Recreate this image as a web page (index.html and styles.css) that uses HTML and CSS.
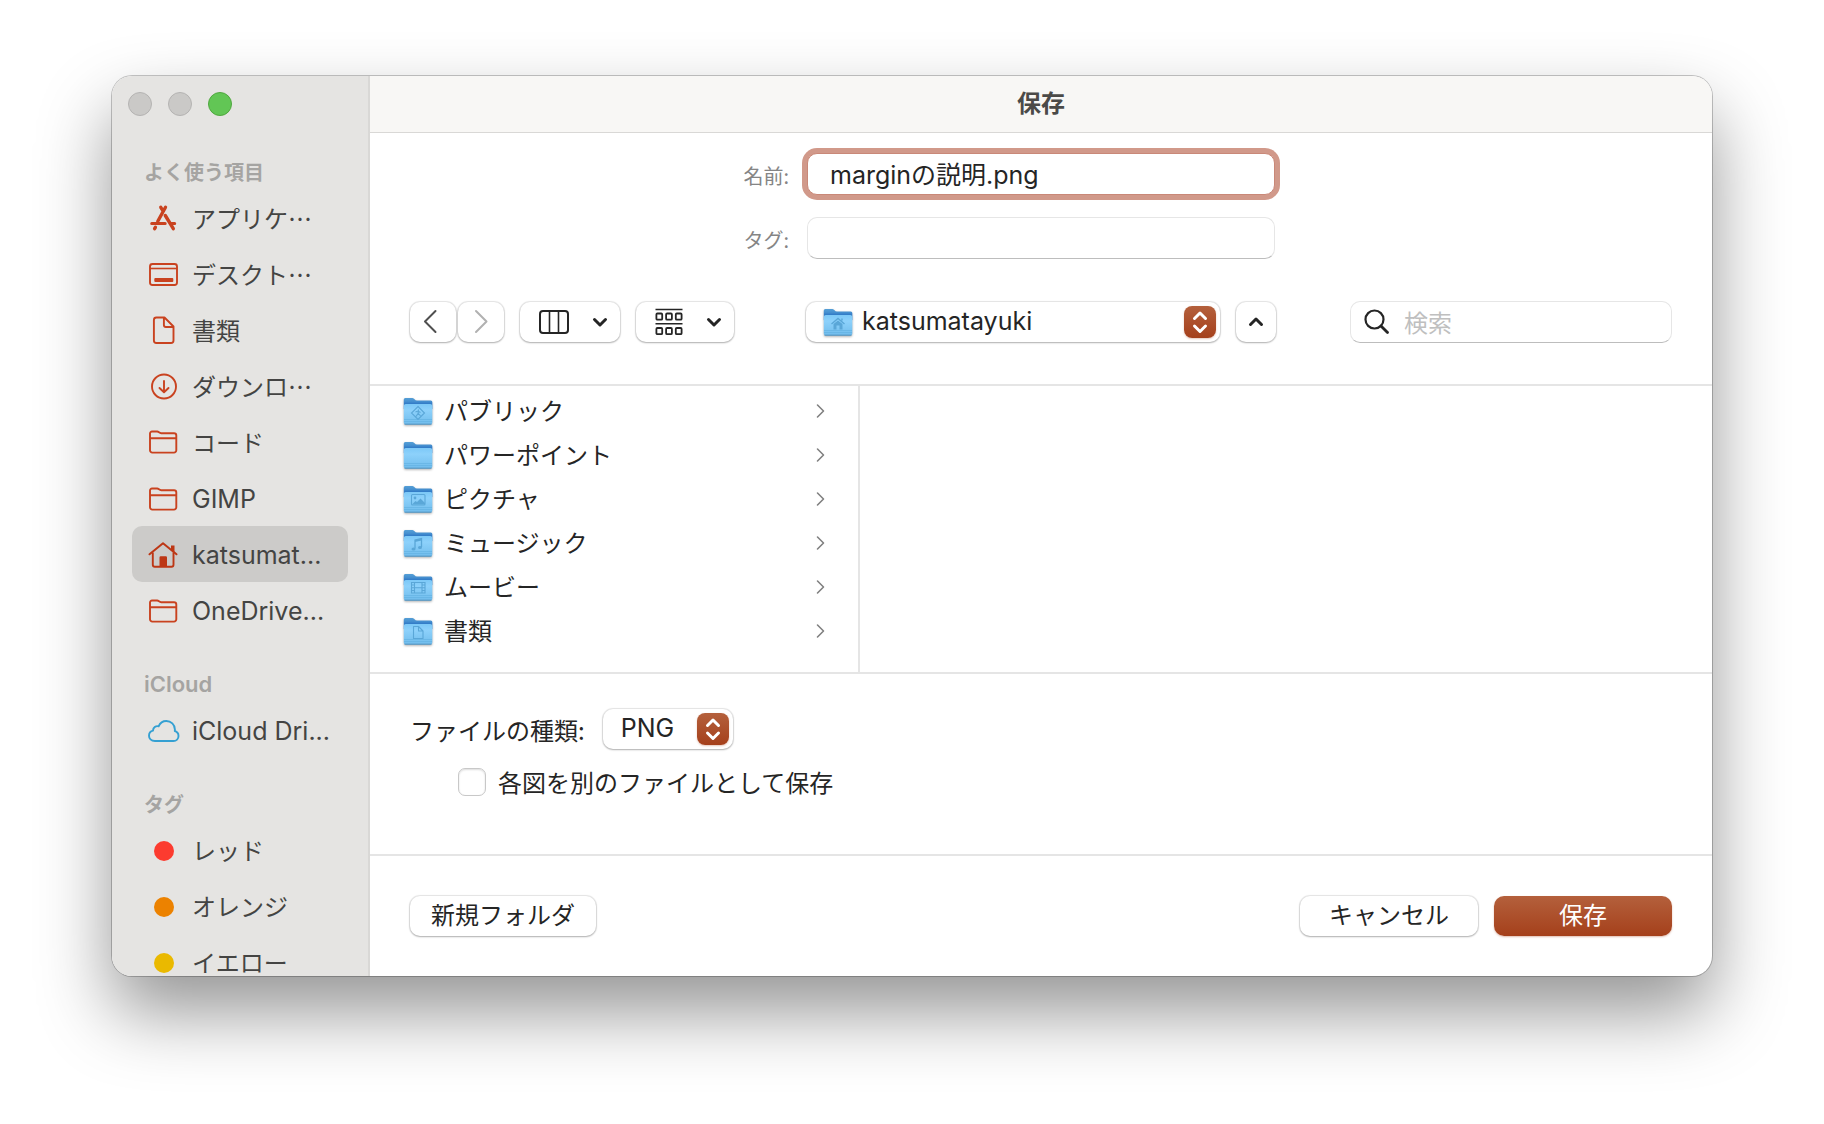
FILE: index.html
```html
<!DOCTYPE html>
<html lang="ja">
<head>
<meta charset="utf-8">
<meta name="viewport" content="width=device-width, initial-scale=1">
<title>保存</title>
<link rel="stylesheet" href="styles.css">
</head>
<body>
<svg class="defs" aria-hidden="true">
  <defs>
    <linearGradient id="folder-back" x1="0" y1="0" x2="0" y2="1">
      <stop offset="0" stop-color="#559fd6"/><stop offset=".3" stop-color="#4690d0"/><stop offset=".6" stop-color="#2b74c4"/>
    </linearGradient>
    <linearGradient id="folder-front" x1="0" y1="0" x2="0" y2="1">
      <stop offset="0" stop-color="#7cc8f7"/><stop offset=".3" stop-color="#8dd1fb"/><stop offset="1" stop-color="#70bcec"/>
    </linearGradient>
    <symbol id="folder" viewBox="0 0 30 30">
      <path d="M.8 2.500a1.500 1.500 0 0 1 1.500-1.500h7.200c1.800 0 2.200 2.600 4.500 2.600H27.800a1.500 1.500 0 0 1 1.500 1.500V12H.8z" fill="url(#folder-back)"/>
      <path d="M.8 9q0-2 2-2h24.500q2 0 2 2v16.500a2 2 0 0 1-2 2H2.800a2 2 0 0 1-2-2z" fill="url(#folder-front)"/>
      <path d="M1 22.500h28M1 24.500h28" stroke="#5eaee0" stroke-width=".8" opacity=".7"/>
      <path d="M1.500 27.200h27" stroke="#5593bd" stroke-width="1"/>
    </symbol>
    <symbol id="side-folder" viewBox="0 0 30 30">
      <path d="M2 6.500a2 2 0 0 1 2-2h5.200c1.600 0 2 1.700 4 1.700H26a2.300 2.300 0 0 1 2.300 2.300v14.800a2.300 2.300 0 0 1-2.300 2.300H4.300A2.300 2.300 0 0 1 2 23.300zM2 11.200h26.300" fill="none" stroke="currentColor" stroke-width="1.900"/>
    </symbol>
    <symbol id="updown" viewBox="0 0 32 32">
      <path d="M10.500 12.500 16 7l5.500 5.500M10.500 20 16 25.500 21.500 20" fill="none" stroke="#fff" stroke-width="3" stroke-linecap="round" stroke-linejoin="round"/>
    </symbol>
    <symbol id="disclosure" viewBox="0 0 12 16">
      <path d="m3.500 2 6 6-6 6" fill="none" stroke="#818181" stroke-width="1.600" stroke-linecap="round" stroke-linejoin="round"/>
    </symbol>
    <symbol id="chevron" viewBox="0 0 16 12">
      <path d="m2.500 3.500 5.500 5.500 5.500-5.500" fill="none" stroke="#252525" stroke-width="3" stroke-linecap="round" stroke-linejoin="round"/>
    </symbol>
  </defs>
</svg>

<div class="window" role="dialog" aria-labelledby="title">
  <nav class="sidebar">
    <div class="lights">
      <button class="light" type="button" aria-label="閉じる"></button>
      <button class="light" type="button" aria-label="最小化"></button>
      <button class="light light-zoom" type="button" aria-label="拡大"></button>
    </div>
    <h2 class="group">よく使う項目</h2>
    <ul class="places">
      <li><a class="place" href="#"><svg class="place-icon" viewBox="0 0 30 30"><g fill="none" stroke="currentColor" stroke-width="3.400" stroke-linecap="round"><path d="M17.500 4.300 9.800 18.200M12.800 4.300l1.900 3.200M17.300 12.500l8 13.200M6.600 25.700l.8-1.400"/><path d="M3.700 20.500h13.500M23.500 20.500h3.200" stroke-width="3"/></g></svg><span>アプリケ…</span></a></li>
      <li><a class="place" href="#"><svg class="place-icon" viewBox="0 0 30 30"><rect x="2" y="5" width="27" height="21" rx="2.500" fill="none" stroke="currentColor" stroke-width="1.900"/><path d="M2 9.500h27" stroke="currentColor" stroke-width="1.600"/><rect x="6.300" y="19" width="19" height="4" rx="1" fill="currentColor"/></svg><span>デスクト…</span></a></li>
      <li><a class="place" href="#"><svg class="place-icon" viewBox="0 0 30 30"><path d="M8.400 2.500h8.100l9 9V25.500a2.500 2.500 0 0 1-2.500 2.500H8.400A2.500 2.500 0 0 1 5.900 25.500V5a2.500 2.500 0 0 1 2.500-2.500zM15.900 3v7a2 2 0 0 0 2 2h7.400" fill="none" stroke="currentColor" stroke-width="1.900" stroke-linejoin="round"/></svg><span>書類</span></a></li>
      <li><a class="place" href="#"><svg class="place-icon" viewBox="0 0 30 30"><g fill="none" stroke="currentColor" stroke-width="1.900" stroke-linecap="round" stroke-linejoin="round"><circle cx="16" cy="15.500" r="12"/><path d="M16 10v11M11.500 17l4.500 4.300 4.500-4.300"/></g></svg><span>ダウンロ…</span></a></li>
      <li><a class="place" href="#"><svg class="place-icon"><use href="#side-folder"/></svg><span>コード</span></a></li>
      <li><a class="place latin" href="#"><svg class="place-icon"><use href="#side-folder"/></svg><span>GIMP</span></a></li>
      <li><a class="place latin selected" href="#" aria-current="page"><svg class="place-icon" viewBox="0 0 30 30"><path d="M1.500 14.300 15 3.300l13.500 11" fill="none" stroke="currentColor" stroke-width="2" stroke-linecap="round" stroke-linejoin="round"/><path d="M23 5.500h3.500v7L23 9.500z" fill="currentColor"/><path d="M4.800 12.500v12.300a2 2 0 0 0 2 2h16.700a2 2 0 0 0 2-2V12.500" fill="none" stroke="currentColor" stroke-width="1.900"/><path d="M11.500 17.500a1.200 1.200 0 0 1 1.200-1.200h5.100a1.200 1.200 0 0 1 1.200 1.200V27h-7.500z" fill="currentColor"/></svg><span>katsumat...</span></a></li>
      <li><a class="place latin" href="#"><svg class="place-icon"><use href="#side-folder"/></svg><span>OneDrive...</span></a></li>
    </ul>
    <h2 class="group latin">iCloud</h2>
    <ul class="places">
      <li><a class="place latin" href="#"><svg class="place-icon cloud" viewBox="0 0 34 30"><path d="M9 25C5 25 3 22.500 3 19.700c0-2.700 1.700-4.600 4-5.100.1-2.900 2.700-5 5.600-4.300C14 7 17 5 20.300 5c4.700 0 8.500 3.700 8.600 8.400 0 .8 0 1-.1 1.600 2.200.7 3.700 2.500 3.700 4.900 0 2.900-2.200 5.100-5.100 5.100z" fill="none" stroke="currentColor" stroke-width="1.900" stroke-linejoin="round"/></svg><span>iCloud Dri...</span></a></li>
    </ul>
    <h2 class="group">タグ</h2>
    <ul class="places">
      <li><a class="place" href="#"><i class="dot red"></i><span>レッド</span></a></li>
      <li><a class="place" href="#"><i class="dot orange"></i><span>オレンジ</span></a></li>
      <li><a class="place" href="#"><i class="dot yellow"></i><span>イエロー</span></a></li>
    </ul>
  </nav>

  <form class="main">
    <header class="titlebar"><h1 id="title">保存</h1></header>

    <section class="top">
      <div class="fields">
        <label for="name">名前:</label>
        <input class="field focused" id="name" type="text" value="marginの説明.png">
        <label for="tags">タグ:</label>
        <input class="field" id="tags" type="text">
      </div>
      <div class="toolbar">
        <div class="tools">
          <div class="history">
            <button class="btn" type="button" aria-label="戻る"><svg width="46" height="40" viewBox="0 0 46 40"><path d="M25.500 9 15 19.500 25.500 30" fill="none" stroke="#4f4f4f" stroke-width="2" stroke-linecap="round" stroke-linejoin="round"/></svg></button>
            <button class="btn" type="button" aria-label="進む"><svg width="46" height="40" viewBox="0 0 46 40"><path d="M18 9 28.500 19.500 18 30" fill="none" stroke="#b1b1b1" stroke-width="2" stroke-linecap="round" stroke-linejoin="round"/></svg></button>
          </div>
          <button class="btn menu-btn" type="button" aria-label="カラム表示"><svg width="30" height="24" viewBox="0 0 30 24"><rect x="1" y="1" width="28" height="22" rx="3" fill="none" stroke="#252525" stroke-width="2"/><path d="M10.500 1v22M19.500 1v22" stroke="#252525" stroke-width="1.600"/></svg><svg width="16" height="12"><use href="#chevron"/></svg></button>
          <button class="btn menu-btn group-btn" type="button" aria-label="グループ"><svg width="28" height="28" viewBox="0 0 28 28"><path d="M.5 1.500h27M.5 15.800h27" stroke="#252525" stroke-width="1.600"/><g fill="none" stroke="#252525" stroke-width="1.800"><rect x="1.400" y="5.500" width="5.800" height="6.200" rx="1"/><rect x="11.100" y="5.500" width="5.800" height="6.200" rx="1"/><rect x="20.800" y="5.500" width="5.800" height="6.200" rx="1"/><rect x="1.400" y="20" width="5.800" height="6.200" rx="1"/><rect x="11.100" y="20" width="5.800" height="6.200" rx="1"/><rect x="20.800" y="20" width="5.800" height="6.200" rx="1"/></g></svg><svg width="16" height="12"><use href="#chevron"/></svg></button>
        </div>
        <div class="location">
          <div class="popup path">
            <svg class="folder" viewBox="0 0 30 30"><use href="#folder"/><path d="m8.500 16 6.500-5.500 6.500 5.500M19 12.500v-2" fill="none" stroke="#5aa7d8" stroke-width="1.400"/><path d="M10.500 16 15 12.500l4.500 3.500v5.500h-3v-4h-3v4h-3z" fill="#5aa7d8"/></svg>
            <select aria-label="場所"><option>katsumatayuki</option></select>
            <svg class="knob"><use href="#updown"/></svg>
          </div>
          <button class="btn square" type="button" aria-label="折りたたむ"><svg class="flip" width="16" height="12"><use href="#chevron"/></svg></button>
        </div>
        <label class="search">
          <svg width="26" height="26" viewBox="0 0 26 26"><circle cx="10.500" cy="10.500" r="9" fill="none" stroke="#252525" stroke-width="2.200"/><path d="m17 17 6.500 6.500" stroke="#252525" stroke-width="2.800" stroke-linecap="round"/></svg>
          <input type="search" placeholder="検索" aria-label="検索">
        </label>
      </div>
    </section>

    <section class="browser">
      <ul class="column">
        <li class="item"><svg class="folder" viewBox="0 0 30 30"><use href="#folder"/><path d="m15 9.500 6.500 6.500-6.500 6.500L8.500 16zM15.500 12.500l-.5 4-2 3M15 16l2.500 3M12.500 15l2.500-1 2.500 1.500" fill="none" stroke="#5aa7d8" stroke-width="1.100"/></svg><span>パブリック</span><svg class="disclosure"><use href="#disclosure"/></svg></li>
        <li class="item"><svg class="folder" viewBox="0 0 30 30"><use href="#folder"/></svg><span>パワーポイント</span><svg class="disclosure"><use href="#disclosure"/></svg></li>
        <li class="item"><svg class="folder" viewBox="0 0 30 30"><use href="#folder"/><rect x="8.500" y="9.500" width="13.500" height="10.500" rx="1" fill="none" stroke="#5aa7d8" stroke-width="1.100"/><circle cx="12" cy="13" r="1.400" fill="#5aa7d8"/><path d="m9 19.500 3.500-3.500 1.500 1 3.500-3.500 4.500 4.500v1.500z" fill="#5aa7d8"/></svg><span>ピクチャ</span><svg class="disclosure"><use href="#disclosure"/></svg></li>
        <li class="item"><svg class="folder" viewBox="0 0 30 30"><use href="#folder"/><path d="M12 19.500V11l6.500-1.500V18" fill="none" stroke="#5aa7d8" stroke-width="1.300"/><path d="M12 11l6.500-1.500v2L12 13z" fill="#5aa7d8"/><ellipse cx="10.500" cy="20" rx="2" ry="1.600" fill="#5aa7d8"/><ellipse cx="17" cy="18.500" rx="2" ry="1.600" fill="#5aa7d8"/></svg><span>ミュージック</span><svg class="disclosure"><use href="#disclosure"/></svg></li>
        <li class="item"><svg class="folder" viewBox="0 0 30 30"><use href="#folder"/><path d="M8.500 9.500h13.500v10.500H8.500zM11.500 9.500V20M19 9.500V20M11.500 14.800H19M8.500 12h3M8.500 14.800h3M8.500 17.500h3M19 12h3M19 14.800h3M19 17.500h3" fill="none" stroke="#5aa7d8" stroke-width="1.100"/></svg><span>ムービー</span><svg class="disclosure"><use href="#disclosure"/></svg></li>
        <li class="item"><svg class="folder" viewBox="0 0 30 30"><use href="#folder"/><path d="M10.500 9.500h5l4.500 4.500v7.500h-9.500zM15.500 9.500V14H20" fill="none" stroke="#5aa7d8" stroke-width="1.100" stroke-linejoin="round"/></svg><span>書類</span><svg class="disclosure"><use href="#disclosure"/></svg></li>
      </ul>
    </section>

    <section class="options">
      <div class="option">
        <label for="type">ファイルの種類:</label>
        <div class="popup type">
          <select id="type"><option>PNG</option></select>
          <svg class="knob"><use href="#updown"/></svg>
        </div>
      </div>
      <label class="check"><input type="checkbox"><span>各図を別のファイルとして保存</span></label>
    </section>

    <footer class="footer">
      <button class="btn new-folder" type="button">新規フォルダ</button>
      <button class="btn action" type="button">キャンセル</button>
      <button class="btn action primary" type="submit">保存</button>
    </footer>
  </form>
</div>
</body>
</html>
```

FILE: styles.css
```css
:root {
  --ja: "Noto Sans CJK JP", sans-serif;
  --mixed: Inter, "Noto Sans CJK JP", sans-serif;
  --line: #e5e5e5;
  --accent: #c9421f;
}

* { box-sizing: border-box; }

body {
  margin: 0;
  padding: 76px 112px 148px;
  background: #fff;
  color: #252525;
  font: 24px/32px var(--ja);
  overflow-x: hidden;
}

h1, h2, ul { margin: 0; padding: 0; list-style: none; }
button, input, select { font: inherit; color: inherit; margin: 0; }
svg { flex: none; display: block; }
.defs { position: absolute; width: 0; height: 0; }
.latin { font-family: var(--mixed); }

.window {
  display: grid;
  grid-template-columns: 258px 1fr;
  border-radius: 20px;
  overflow: hidden;
  background: #fff;
  box-shadow: 0 0 0 1px rgba(0, 0, 0, .22), 0 36px 72px rgba(0, 0, 0, .42);
}

/* Sidebar */
.sidebar {
  contain: size;
  overflow: hidden;
  padding: 16px 20px 0;
  background: #e5e4e2;
  border-right: 2px solid #d9d8d6;
}
.lights { display: flex; gap: 16px; height: 62px; margin-left: -4px; }
.light {
  width: 24px;
  height: 24px;
  padding: 0;
  border: 1px solid #b4b3b2;
  border-radius: 50%;
  background: #cac9c7;
}
.light-zoom { background: #62c655; border-color: #50a73f; }
.group {
  padding-left: 12px;
  color: #a5a4a2;
  font-size: 20px;
  font-weight: 700;
  line-height: 36px;
}
.group.latin { font-size: 22px; font-weight: 600; }
.places { margin-bottom: 28px; }
.place {
  display: flex;
  align-items: center;
  gap: 14px;
  height: 56px;
  padding-left: 16px;
  border-radius: 10px;
  color: #444443;
  text-decoration: none;
  white-space: nowrap;
}
.place.latin { padding-top: 2px; font-size: 25px; }
.place.selected { background: #cccbc9; }
.place-icon { width: 30px; height: 30px; color: var(--accent); }
.selected .place-icon { color: #bd3715; }
.cloud { width: 34px; margin: 0 -2px; color: #35a0d2; }
.dot { width: 20px; height: 20px; margin: 2px 4px 0 6px; border-radius: 50%; }
.red { background: #fc3b2f; }
.orange { background: #ec8200; }
.yellow { background: #eab900; }

/* Title and fields */
.main { min-width: 0; }
.titlebar {
  height: 57px;
  background: #f8f7f5;
  border-bottom: 1px solid #d9d8d6;
  text-align: center;
}
.titlebar h1 { color: #4b4a48; font-size: 24px; font-weight: 700; line-height: 52px; }
.top { padding: 20px 40px 41px; border-bottom: 2px solid var(--line); }
.fields {
  display: grid;
  grid-template-columns: 1fr 468px 1fr;
  gap: 22px 18px;
  align-items: center;
}
.fields label { grid-column: 1; padding-top: 3px; text-align: right; font-size: 20px; color: #858585; }
.field {
  grid-column: 2;
  width: 100%;
  height: 42px;
  padding: 0 22px 2px;
  border: 1px solid #e6e6e6;
  border-bottom-color: #bdbdbd;
  border-radius: 10px;
  outline: 0;
  background: #fff;
  font-family: var(--mixed);
  font-size: 25px;
}
.field.focused { border-color: #c98878; box-shadow: 0 0 0 5px #d1998a; }

/* Toolbar */
.toolbar {
  display: grid;
  grid-template-columns: 1fr 470px 1fr;
  align-items: center;
  margin-top: 42px;
}
.tools { display: flex; gap: 16px; }
.history { display: flex; gap: 2px; }
.btn, .popup {
  height: 40px;
  border: 0;
  border-radius: 10px;
  background: #fff;
  box-shadow: 0 0 1px 1px rgba(0, 0, 0, .1), 0 1px 2px rgba(0, 0, 0, .24);
}
.btn { padding: 0; line-height: 32px; }
.menu-btn { display: flex; align-items: center; justify-content: space-between; width: 100px; padding: 0 12px 0 19px; }
.group-btn { width: 98px; }
.location { display: flex; gap: 16px; }
.popup { position: relative; display: flex; align-items: center; }
.path { flex: 1; }
.popup select {
  appearance: none;
  width: 100%;
  height: 40px;
  padding: 0 40px 2px 18px;
  border: 0;
  border-radius: 10px;
  outline: 0;
  background: transparent;
  font-family: var(--mixed);
  font-size: 25px;
}
.popup.path select { padding-left: 56px; }
.path .folder { position: absolute; left: 17px; pointer-events: none; }
.knob {
  position: absolute;
  right: 4px;
  width: 32px;
  height: 32px;
  border-radius: 8px;
  background: linear-gradient(#b4603c, #a5401b);
  box-shadow: 0 1px 2px rgba(165, 64, 27, .3);
  pointer-events: none;
}
.square { display: grid; place-items: center; width: 40px; }
.flip { transform: rotate(180deg); }
.search {
  display: flex;
  align-items: center;
  justify-self: end;
  gap: 14px;
  width: 322px;
  height: 42px;
  padding: 0 13px;
  border: 1px solid #e6e6e6;
  border-bottom-color: #bdbdbd;
  border-radius: 10px;
}
.search input { flex: 1; min-width: 0; padding: 0; border: 0; outline: 0; background: none; }
.search input::placeholder { color: #bfbfbf; }

/* Column browser */
.browser { display: flex; height: 288px; border-bottom: 2px solid var(--line); }
.column { width: 490px; padding: 3px 32px 0 33px; border-right: 2px solid var(--line); }
.item { display: flex; align-items: center; gap: 11px; height: 44px; }
.item span { flex: 1; padding-bottom: 2px; }
.folder { width: 30px; height: 30px; margin-top: 2px; filter: drop-shadow(0 1px 1px rgba(0, 0, 0, .3)); }
.disclosure { width: 12px; height: 16px; }

/* Options */
.options { height: 182px; padding: 35px 40px 0; border-bottom: 2px solid var(--line); }
.option { display: flex; align-items: center; gap: 18px; }
.option label { padding-top: 2px; }
.type { width: 130px; }
.check { display: flex; align-items: center; gap: 12px; margin: 17px 0 0 48px; }
.check input {
  appearance: none;
  width: 28px;
  height: 28px;
  border: 1px solid #c8c8c8;
  border-radius: 7px;
  background: #fff;
  box-shadow: inset 0 1px 2px rgba(0, 0, 0, .14);
}

/* Footer */
.footer { display: flex; gap: 16px; padding: 40px; }
.btn.new-folder { width: 186px; margin-right: auto; }
.action { width: 178px; }
.btn.new-folder, .btn.action { padding-bottom: 5px; }
.primary {
  background: linear-gradient(#b4603c, #a5401b);
  box-shadow: 0 1px 2px rgba(165, 64, 27, .35);
  color: #fff;
}
```
